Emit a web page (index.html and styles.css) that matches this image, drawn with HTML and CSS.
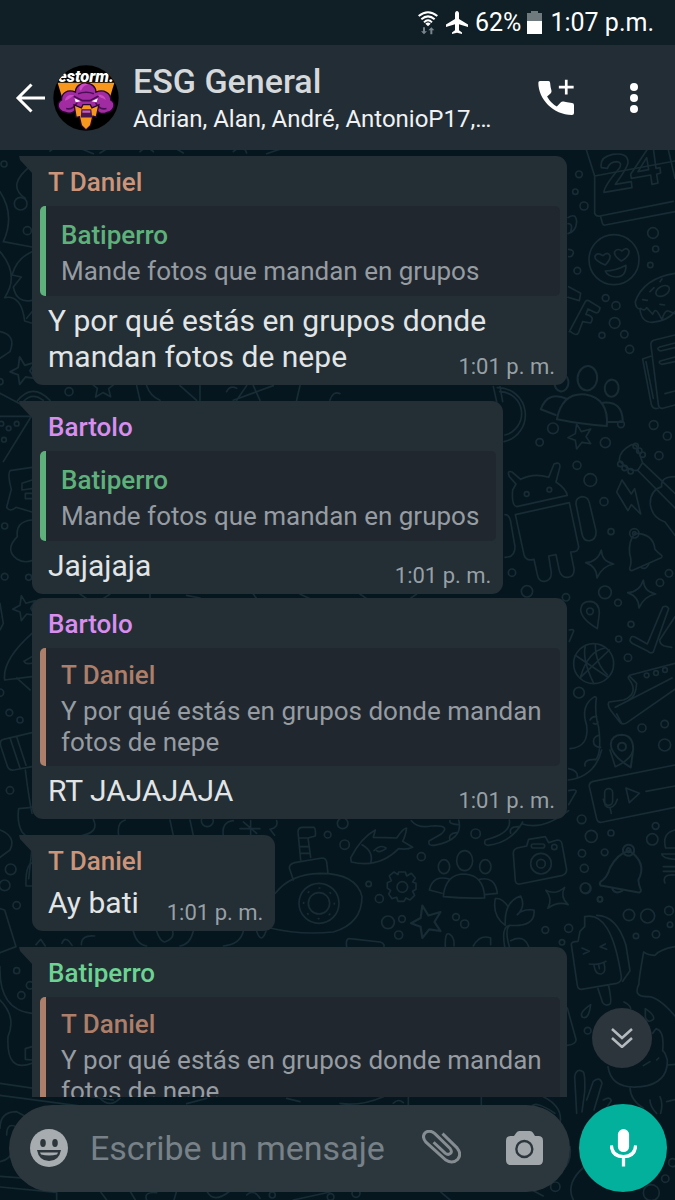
FILE: index.html
```html
<!DOCTYPE html>
<html lang="es">
<head>
<meta charset="utf-8">
<meta name="viewport" content="width=device-width, initial-scale=1">
<title>ESG General</title>
<link rel="stylesheet" href="styles.css">
</head>
<body>
<div class="status">
  <svg class="wifi" viewBox="0 0 60 72" aria-hidden="true">
    <g fill="none" stroke="#fff" stroke-width="6"><path d="M2 15Q30-8 58 15"/><path d="M10 25Q30 7 50 25"/><path d="M18 34Q30 22 42 34"/></g>
    <path d="M22 38Q30 31 38 38L30 46z" fill="#fff"/>
    <path d="M15 49h6v12h6l-9 9-9-9h6zM37 70h6V58h6l-9-9-9 9h6z" fill="#77858b"/>
  </svg>
  <svg class="plane" viewBox="0 0 24 24" aria-hidden="true"><path fill="#fff" d="M23 16v-2.400L14 8V2.500C14 1.100 13 0 12 0s-2 1.100-2 2.500V8L1 13.600V16l9-2.800v6L7 21.500V23l5-1.300 5 1.300v-1.500l-3-2.300v-6z"/></svg>
  <span>62%</span>
  <svg class="battery" viewBox="0 0 15 23" aria-hidden="true"><path fill="#6f7a7f" d="M4 0h7v2h4v8H0V2h4z"/><path fill="#fff" d="M0 10h15v13H0z"/></svg>
  <span>1:07 p.m.</span>
</div>

<header class="header">
  <button class="icon-btn back" aria-label="Atrás"><svg viewBox="0 0 30 30" fill="none" stroke="#fff" stroke-width="3"><path d="M30 15H3M16.500 1.500L3 15l13.500 13.500"/></svg></button>
  <svg class="avatar" viewBox="0 0 200 200" role="img" aria-label="Foto del grupo">
    <defs><clipPath id="round"><circle cx="100" cy="100" r="99"/></clipPath></defs>
    <g clip-path="url(#round)">
      <path fill="#000" d="M0 0h200v200H0z"/>
      <path fill="#f7981d" d="M14 54h172l-16 52H30z"/>
      <text x="100" y="52" text-anchor="middle" class="avatar-text">estorm.</text>
      <path fill="#a12ba0" stroke="#25072f" stroke-width="4" d="M68 82c0-36 62-36 62 0 24-10 46 4 45 24 18 11 9 35-12 38-18 8-29-2-33-12H72c-9 12-22 18-36 11-21-4-28-26-10-37-1-20 18-34 42-24z"/>
      <path fill="#cc4bc5" d="M80 68c4-14 20-14 27-7-10-1-16 4-20 13-3 7-8 1-7-6zM134 91c11-4 25 3 26 16-7-8-17-6-26-16zM36 108c2-14 15-20 28-16-9 5-16 14-28 16z"/>
      <path fill="none" stroke="#4a0e57" stroke-width="5" d="M63 95l27 13h22l26-14M76 87q25-9 48 0M40 132q21 5 33-18M162 132q-22 5-33-18"/>
      <path fill="#fff" d="M65 101l19 9-15 3zM136 101l-19 9 15 3z"/>
      <path fill="#f7981d" stroke="#25072f" stroke-width="4" d="M64 121l22 9 5-10h22l5 10 21-9-8 37-10-3-7 28-14 14-14-14-6-26-10 2z"/>
      <path fill="#4b164c" d="M86 134h30l3 25H84z"/><path fill="#c85fbb" d="M89 138h24v7H89z"/>
    </g>
  </svg>
  <div class="heading">
    <h1>ESG General</h1>
    <p>Adrian, Alan, André, AntonioP17,…</p>
  </div>
  <button class="icon-btn call" aria-label="Llamada grupal"><svg viewBox="0 0 110 110"><path fill="#fff" d="M6 6h25q5 0 5 5 1 14 4 23 1 5-2 8L27 52q11 20 29 30l12-13q3-3 8-2 9 3 25 4 6 0 6 6v24q0 6-6 6C45 106 1 60 1 11q0-5 5-5z"/><path d="M84 2v44M62 24h44" stroke="#fff" stroke-width="8"/></svg></button>
  <button class="icon-btn more" aria-label="Más opciones"><svg viewBox="0 0 8 30" fill="#fff"><circle cx="4" cy="4" r="4"/><circle cx="4" cy="15" r="4"/><circle cx="4" cy="26" r="4"/></svg></button>
</header>

<main class="chat">
  <svg class="wallpaper" viewBox="0 150 675 1050" preserveAspectRatio="xMidYMin slice" aria-hidden="true">
    <defs>
      <g id="star4"><path d="M5-42Q6-8 42 0 8 6-8 42-8 8-42-4-6-6 5-42z"/></g>
      <g id="star5"><path d="M-10-35L4-12 32-20 18 3 32 24 6 20-10 40-14 14-36 6-14-6z"/></g>
      <g id="bell"><path d="M-30-50Q25-50 30-2 38 8 50 16 54 22 42 26L-40 62Q-46 62-46 54-38 36-46 12-50-28-30-50z"/><circle cx="-32" cy="-50" r="14"/><circle cx="-32" cy="-50" r="5"/><path d="M-12 52q14 10 24-10"/></g>
      <g id="pin"><path d="M22 52Q-28 22-28-6-26-30 0-30 28-28 28 6z"/><circle r="10"/></g>
      <g id="people"><ellipse cx="0" cy="-48" rx="24" ry="30"/><ellipse cx="62" cy="-30" rx="17" ry="21"/><ellipse cx="-62" cy="-30" rx="17" ry="21"/><path d="M-64 60Q-58-8 0-8 58-4 60 64 0 66-64 60zM-44 8Q-94-8-106 40L-68 50M44 8Q92-2 98 50L60 54"/></g>
    </defs>
    <g class="doodle">
      <g transform="translate(480 145) scale(.3333)">
        <path d="M316 5l28 88 0 112q4 10 16 8l220-44M344 93l241-45M362 215l6 22q2 4 8 3l209-40M564 10l21 90"/>
        <path d="M364 68q-6-32 34-40 46-6 46 24 0 14-38 66l48-8 2 18-84 14q0-18 46-72 10-18-8-20-20 0-28 20zM504 10l-52 78 2 12 58-10 4 28 18-4-4-26 12-4-2-16-12 2-8-60zM500 38l6 36-32 6z"/>
        <circle cx="402" cy="344" r="75"/><path d="M376 360q-34-14-31-26 6-14 24-2 14-14 21 0 2 12-14 28zM424 348q-24-16-20-28 8-12 22-2 14-14 21 0 2 16-23 30zM376 378q30 0 62-17 0 36-30 35-26-2-32-18z"/>
        <path d="M585 385Q490 400 466 470 466 490 480 492 484 532 516 532 560 530 585 500M482 490q12 10 18-2l18 20q8-22 18-2l10 18q8-30 20-26l19 8M510 440l12-12M488 464l14 2M540 478l14 2M540 410l6-8"/><ellipse cx="548" cy="438" rx="22" ry="14" transform="rotate(-30 548 438)"/>
        <path d="M266 425l36 20-4 22-34-10M268 560l48-90q4-6 12-2l32 20q-2 20-16 14l-20-10-6 16q28 6 14 26l-24-4-12 32q-6 14-24-2M264 218q24-16 26 12-2 30-26 36M264 236q16 0 8 24M266 313q16 2 14 12-4 12-14 10"/>
        <path d="M585 570l-64 16q-10 4-8 16l22 176q2 14 14 12l36-10M512 634l-24 8 26 136q4 16 20 12M585 594l-46 12q-12 6 2 12l44-10M585 636l-44 12q-8 6 4 10l40-8M585 738l-30 8M498 650l22 110"/>
        <use href="#people" transform="translate(316 758) rotate(6) scale(1.22)"/>
        <path d="M40 725l10 45M60 725l8 45M72 890a82 82 0 0 0-20-162M75 870a66 66 0 0 0-16-130"/>
        <use href="#star5" x="300" y="872"/>
        <circle cx="297" cy="88" r="10"/><circle cx="286" cy="140" r="8"/><circle cx="312" cy="183" r="12"/><circle cx="519" cy="264" r="16"/><circle cx="527" cy="312" r="9"/><circle cx="511" cy="360" r="8"/><circle cx="292" cy="377" r="10"/><circle cx="377" cy="459" r="10"/><circle cx="408" cy="482" r="12"/><circle cx="404" cy="534" r="16"/><circle cx="366" cy="571" r="9"/><circle cx="433" cy="568" r="11"/><circle cx="449" cy="613" r="12"/><circle cx="423" cy="838" r="10"/><circle cx="219" cy="850" r="16"/><circle cx="179" cy="892" r="11"/><circle cx="376" cy="893" r="15"/><circle cx="521" cy="840" r="13"/><circle cx="562" cy="873" r="12"/>
      </g>
      <g transform="translate(480 430) scale(.3333)">
        <path d="M110 230q-16-2-12-50l10-18-20-22q-8-20 8-14l26 22q40-20 84-6l16-40q18-8 18 8l-12 46q30 20 34 40zM106 254l162-36 28 132q0 16-24 16l10 50q2 24-18 26-20 2-26-20l-10-48-22 4 8 50q0 24-20 26-18 2-22-20l-10-46q-24 6-30-14zM288 222q-2-18 18-22 18 0 22 18l20 84q2 26-18 30-20 2-24-20zM75 254q12 0 16 16l14 80q0 32-30 32"/><circle cx="140" cy="192" r="7"/><circle cx="208" cy="179" r="7"/>
        <circle cx="291" cy="106" r="12"/><circle cx="331" cy="150" r="19"/><circle cx="372" cy="215" r="12"/><circle cx="393" cy="305" r="9"/><circle cx="537" cy="77" r="12"/><circle cx="96" cy="428" r="11"/><circle cx="141" cy="484" r="17"/><circle cx="258" cy="502" r="11"/><circle cx="375" cy="487" r="19"/><circle cx="414" cy="518" r="10"/><circle cx="540" cy="458" r="11"/><circle cx="567" cy="430" r="11"/><circle cx="453" cy="583" r="9"/><circle cx="416" cy="627" r="9"/><circle cx="444" cy="683" r="11"/><circle cx="297" cy="788" r="16"/><circle cx="486" cy="894" r="12"/><circle cx="554" cy="882" r="11"/><circle cx="554" cy="945" r="18"/>
        <path d="M426 150l28 42 10-16 18 76-28-28-10 18-34-56z"/>
        <path d="M418 92q-2-28 36-48 18-2 20 16l14 38-14 22q-24 8-56-28zM472 120l113 114M490 100l95 90M585 140q-44 0-40 30M545 170q-36 12-34 54 6 40 44 52l30 40"/><g><circle cx="467" cy="48" r="8"/><circle cx="478" cy="62" r="8"/><circle cx="488" cy="74" r="8"/><circle cx="421" cy="102" r="8"/><circle cx="434" cy="114" r="8"/><circle cx="452" cy="124" r="8"/></g>
        <use href="#bell" transform="translate(495 360)"/><use href="#star4" x="359" y="402"/><use href="#star4" x="485" y="492"/><use href="#pin" x="330" y="544"/><use href="#pin" transform="translate(426 950) scale(1.2)"/>
        <path d="M450 632q2-18 16-10l36 20 46-110q12-8 18 4l-46 130q-8 6-16-2l-48-24zM585 560l-46 70q0 12 14 18l22 4M268 600q16-4 12 6l-12 28"/>
        <circle cx="341" cy="701" r="60"/><path d="M286 676l98 66M300 744l88-84M316 648q-10 40 24 110M374 654q-50 10-72 86M346 642q0 60 36 92"/>
        <path d="M585 700l-136 36q-8 6 0 14 28 40-18 60l-44 6q-6 10 6 26l28 36q8 8 20 0l144-100M406 832l170-88M426 882l-16-30M450 740l20 20q-2 40-24 50"/><circle cx="500" cy="736" r="7"/><circle cx="528" cy="729" r="7"/><circle cx="555" cy="720" r="7"/>
        <path d="M270 956q58-4 50-70-20-60 24-86 8 0 4 12-4 40 8 80 10 80-10 98M330 870q6-12 20-10M340 880q10 6 14-4M356 916q-20 6-14 26 6 10 20 10"/>
      </g>
      <g transform="translate(270 750) scale(.3333)">
        <path d="M1215 45L970 94q-14 4-12 16l22 96q4 14 18 10l217-44M1068 114l40 16-30 28zM1128 124l87-16M1000 148l6 18q14 16 30-4l6-14M1020 172l4 18"/><rect x="1004" y="116" width="24" height="50" rx="12"/>
        <path d="M1020 0l16 50q46-20 54-50M895 90q80-10 100-90M896 56q30 6 26 26M945 48q-4-20 30-20M896 122q26-6 22 4l-22 38M758 222q60 20 138-40M424 212q20 24 60 16 60-4 30 24l-36 20q-6 16 14 14 90-16 74-76M540 212q-4 10 24 12M540 270q-6-20 20-22M646 270q80-20 72-60M646 270q-6 16 8 16 70-8 104-70M722 250q-6-20 24-20"/>
        <path d="M242 324q30-60 74-84l-6 22q40 0 70 2 20-30 30-30-4 26-12 40l30 18q-18 8-42 4-60 60-142 40zM276 284q36 20 26 56M312 302q20-20 36-8M348 296q-20 14-28 6"/>
        <path d="M16 430Q60 372 150 370 260 370 276 440 276 520 190 546 90 556 0 534M70 390l-12-36q0-12 16-16l82-14q12 0 14 12l4 34M92 330l-8-84q0-14 14-14l34 0q6 4 4 26l-22 6 8 58M86 264h30M88 290h28M92 310h28"/><circle cx="147" cy="460" r="60"/><circle cx="147" cy="460" r="32"/><circle cx="147" cy="460" r="46" stroke-dasharray="2 34"/>
        <circle cx="397" cy="411" r="16"/><path d="M384 374l2-8h20l4 12 14-8 12 14-8 12 10 4v18l-10 6 6 12-14 14-12-6-6 10h-18l-4-12-14 4-10-14 6-10-10-8v-16l12-6-6-14 14-12z"/>
        <use href="#people" x="584" y="380"/><use href="#star5" transform="translate(470 512) scale(1.3)"/><use href="#star4" transform="translate(860 444) rotate(30) scale(.95)"/>
        <path d="M750 402q-12 2-14-10L730 310q0-12 12-16l28-6 6-20 50-8 10 18 26-8q12 0 14 12l14 76q0 14-12 18z"/><circle cx="813" cy="341" r="31"/><circle cx="813" cy="341" r="13"/><circle cx="853" cy="291" r="8"/><rect x="784" y="282" width="40" height="12" rx="6"/>
        <path d="M704 590q-10-60 14-64 80 6 74-46-34-4-50 14 26-24 10-56-50 16-46 88-40-28-30-80 20-4 38 24M718 590q-14-50 0-62M722 572q40-20 54 18M230 590q-4-26 10-24l90 10q14 4 12 14M526 590q-2-44 12-38 16 8 14 36M610 588q20-36 52-24v20"/>
        <use href="#bell" transform="translate(1074 372) rotate(34) scale(1.2)"/><path d="M1215 240q-40 10-28 54h28M1215 312h-40q2 14 40 16M1180 350h35M1180 364h35M1215 375q-40-4-30 24"/>
        <circle cx="218" cy="220" r="16"/><circle cx="173" cy="254" r="10"/><circle cx="224" cy="284" r="14"/><circle cx="454" cy="320" r="12"/><circle cx="617" cy="251" r="14"/><circle cx="296" cy="402" r="8"/><circle cx="328" cy="446" r="12"/><circle cx="354" cy="517" r="19"/><circle cx="396" cy="507" r="10"/><circle cx="386" cy="555" r="12"/><circle cx="558" cy="501" r="10"/><circle cx="584" cy="522" r="12"/><circle cx="826" cy="540" r="10"/><circle cx="896" cy="535" r="12"/><circle cx="935" cy="208" r="13"/><circle cx="964" cy="259" r="18"/><circle cx="1023" cy="249" r="9"/><circle cx="936" cy="310" r="11"/><circle cx="1004" cy="307" r="10"/><circle cx="943" cy="355" r="12"/><circle cx="946" cy="414" r="15"/><circle cx="990" cy="448" r="7"/><circle cx="1147" cy="268" r="17"/><circle cx="1157" cy="228" r="10"/>
      </g>
      <g transform="translate(550 880) scale(.3333)">
        <path d="M104 110q80-20 110 180 2 16-14 20L94 328q-10 0-12-12L64 194q-2-10 20-10l6-30 14-14zM140 106q60 0 88 90l12 76-22 32M144 326l14 42q8 12 22 4 6-6-4-54M96 204l22 10-18 8M166 192l-16 8 20 8M118 252q30 4 50-8M132 256q4 28 22 26 16-4 8-32M146 254l2 12"/>
        <path d="M375 200q-46 8-60 26-20 0-34-10-16 90-14 96-20 40 28 38 30 0 80 58M122 374q-38 26-24 38 18 8 24-38zM222 366q20 10 20 20M286 386q30 20 24 32-16 14-24-6zM52 384l26 94q2 14-26 18"/>
        <path d="M174 560q10 70 100 60 80-10 78-80-8-26-14-28 6-60-20-66l-10 14M240 620q0 40 40 64M354 555l21-2M330 650q10 20 2 50M350 665l25-6M80 700l-6-110q6-28 26-14 6 10 4 60l-8 60M110 660l20-56q20-16 26 6l-24 80M160 660q20-12 24 2l-20 30M320 540l6-6M300 545l-20 12"/>
        <circle cx="107" cy="25" r="16"/><circle cx="150" cy="58" r="8"/><circle cx="237" cy="105" r="17"/><circle cx="293" cy="108" r="21"/><circle cx="357" cy="92" r="13"/><circle cx="360" cy="134" r="8"/><circle cx="318" cy="163" r="11"/><circle cx="258" cy="168" r="8"/><circle cx="113" cy="452" r="10"/><circle cx="36" cy="187" r="8"/>
      </g>
      <g transform="translate(340 1000) scale(.3333)">
        <path d="M0 310q60 10 130-20M205 290v26M424 290v28M160 310q14-16 30-2M575 320q10-20 70 20M610 290q60 30 50 80M700 600q-30-60 60-120M580 572l30 16M690 440q6 40-20 70M300 574l30 26M930 300q0 20 20 40"/>
        <circle cx="646" cy="560" r="14"/><circle cx="976" cy="536" r="11"/><circle cx="934" cy="578" r="24"/><circle cx="998" cy="488" r="12"/><circle cx="48" cy="580" r="12"/>
      </g>
      <g transform="translate(0 145) scale(.3333)">
        <path d="M0 140q46 70 10 150l86 16M0 320q60 70 14 138 50-10 60 70l20 6M96 320q-46 20-60 70l28 6-24 30q10 50 56 40M96 60q-80 60-20 100M0 560q50 10 30 60L0 640M96 500l-16 20"/>
        <use href="#star5" transform="translate(70 674) scale(1.1)"/><use href="#star5" transform="translate(310 722) rotate(20)"/><circle cx="62" cy="176" r="19"/><circle cx="82" cy="257" r="12"/><circle cx="12" cy="57" r="9"/><circle cx="207" cy="740" r="12"/><circle cx="0" cy="710" r="9"/>
        <path d="M50 770q46-60 100-4M70 770q26-30 60-4M410 722l10 44M440 722q10 30 40 44M540 722l50 44M600 722v44M680 740q10-20 30-10M700 766l120-44M740 722l-30 44M760 722l20 44M900 722l-10 44M990 766q10-30 30-20"/>
        <path d="M0 745l95 50M0 814h94L10 950"/><circle cx="4" cy="836" r="7"/><circle cx="50" cy="836" r="7"/><circle cx="26" cy="850" r="7"/><circle cx="12" cy="884" r="7"/>
        <path d="M150 18l20-14M240 10l40 16M300 24l30-18M420 20q20-20 40 0M520 6l30 18M700 20q30-26 40 4M800 26l60-20"/>
      </g>
      <g transform="translate(0 370) scale(.3333)">
        <path d="M96 292l-66 10q-8 10 4 56l-14 54q10 16 28 0l48 14M96 330l-30 10v20l30-4M96 370h-20v16h20M96 450q-50 4-44 50-40 40 0 68 20 12 44 4M0 700l10 60-10 20M96 790q-90 80-82 140l82-10M96 860l-24 14q4 10 24 6M50 924l40 36"/>
        <use href="#star5" transform="translate(74 712)"/><circle cx="14" cy="468" r="9"/><circle cx="14" cy="620" r="10"/><circle cx="86" cy="622" r="9"/><circle cx="0" cy="968" r="11"/><circle cx="28" cy="1028" r="10"/>
        <path d="M240 672l20 14M330 672l-20 14M450 672v14M560 676l40 8M760 672l10 14M900 672l30 14M1080 672l20 14M1250 672l-20 14"/>
      </g>
      <g transform="translate(0 580) scale(.3333)">
        <path d="M96 458L10 478q-12 2-8 20l20 60q4 14 20 12l54-10M30 474l30 90M50 470l28 86M76 570q10 80 20 130M96 682l-40 4q-6 40 10 70l30 30M0 750q50 20 30 60L0 832M86 896l10-90M280 718q20 40-40 50M356 766q-6-40 20-46M510 720l10 46M570 720l10 46M670 766q-6-40 30-44M830 722q6 20-20 26l14 18M720 746h60M730 726l40 34M752 722v44"/>
        <circle cx="60" cy="420" r="9"/><circle cx="30" cy="631" r="11"/><circle cx="32" cy="868" r="16"/><circle cx="622" cy="722" r="18"/>
      </g>
      <g transform="translate(0 820) scale(.3333)">
        <path d="M96 128q-20 10-18 70h18M0 266l14 4 34 110L0 398M108 374l14-16 14 20M244 374q0-30 40-26M186 370q10-26 30 6M400 334q10 40 40 44M470 334q10 30 24 32 30-10 24-32M580 334q-10 40-40 44M730 334q-10 40-60 44M770 334q14 40 28 0M0 440q-4 130 96 140M0 540q50 50 24 110-6 110 72 80M96 680l-20 6v32l20 2M0 790l340 50M0 826l300 40"/>
        <circle cx="14" cy="196" r="16"/><circle cx="50" cy="256" r="11"/><circle cx="50" cy="452" r="9"/><circle cx="64" cy="526" r="11"/><circle cx="90" cy="496" r="11"/>
      </g>
      <g transform="translate(0 1085) scale(.3333)">
        <path d="M0 130q0-50 50-50l30 16M20 150q0-40 30-24M0 230q40-10 34-40M0 274l280 20M0 306l170 16v23M300 318l20 27M390 318l16 27M440 345q-10-26 30-22M530 318l-8 27M620 318q20 40 70 0M740 330q20-20 40 10M860 40l40 10M300 40q30 30 60 0M560 56l60-16M880 345l110-24"/>
        <circle cx="817" cy="330" r="9"/><circle cx="992" cy="336" r="10"/>
      </g>
    </g>
  </svg>

  <div class="messages">
    <article class="bubble tail">
      <h2 class="name daniel">T Daniel</h2>
      <blockquote class="quote from-batiperro"><b>Batiperro</b><span>Mande fotos que mandan en grupos</span></blockquote>
      <p class="text">Y por qué estás en grupos donde mandan fotos de nepe<time>1:01 p. m.</time></p>
    </article>
    <article class="bubble tail">
      <h2 class="name bartolo">Bartolo</h2>
      <blockquote class="quote from-batiperro"><b>Batiperro</b><span>Mande fotos que mandan en grupos</span></blockquote>
      <p class="text">Jajajaja<time>1:01 p. m.</time></p>
    </article>
    <article class="bubble follow">
      <h2 class="name bartolo">Bartolo</h2>
      <blockquote class="quote from-daniel"><b>T Daniel</b><span>Y por qué estás en grupos donde mandan fotos de nepe</span></blockquote>
      <p class="text">RT JAJAJAJA<time>1:01 p. m.</time></p>
    </article>
    <article class="bubble tail">
      <h2 class="name daniel">T Daniel</h2>
      <p class="text">Ay bati<time>1:01 p. m.</time></p>
    </article>
    <article class="bubble tail">
      <h2 class="name batiperro">Batiperro</h2>
      <blockquote class="quote from-daniel"><b>T Daniel</b><span>Y por qué estás en grupos donde mandan fotos de nepe</span></blockquote>
    </article>
  </div>

  <button class="scroll-down" aria-label="Ir al final"><svg viewBox="0 0 22 20" fill="none" stroke="#b4babd" stroke-width="2.500"><path d="M1 1l10 9L21 1M1 10l10 9 10-9"/></svg></button>

  <form class="composer">
    <div class="field">
      <button type="button" class="icon-btn emoji" aria-label="Emojis"><svg viewBox="0 0 38 38"><circle cx="19" cy="19" r="19" fill="#a6acaf"/><g fill="#2c363c"><ellipse cx="13" cy="14" rx="2.800" ry="4"/><ellipse cx="25" cy="14" rx="2.800" ry="4"/><path d="M7 21h24q-2 11-12 11T7 21z"/></g><path d="M10 23.500h18l-1 2q-8 2-16 0z" fill="#a6acaf"/></svg></button>
      <input type="text" aria-label="Mensaje" placeholder="Escribe un mensaje">
      <button type="button" class="icon-btn clip" aria-label="Adjuntar"><svg viewBox="0 0 118 106" fill="none" stroke="#858d92" stroke-width="9"><path d="M62 11l44 43q15 19 2 35-16 15-36 2L12 37Q-2 20 10 8q14-10 29 3l46 45q7 10 1 15-7 6-16-1L35 37"/></svg></button>
      <button type="button" class="icon-btn camera" aria-label="Cámara"><svg viewBox="0 0 111 102"><path fill="#a1a7aa" d="M40 0h32q6 0 9 5l6 10h10q14 0 14 14v58q0 15-14 15H14Q0 102 0 87V29q0-14 14-14h10l7-10q3-5 9-5z"/><circle cx="55" cy="54" r="24" fill="none" stroke="#2c363c" stroke-width="7"/></svg></button>
    </div>
    <button type="button" class="mic" aria-label="Grabar mensaje de voz"><svg viewBox="0 0 82 114"><rect x="24" y="0" width="34" height="70" rx="17" fill="#fff"/><path d="M4 50q2 34 37 34t37-34M41 84v30" fill="none" stroke="#fff" stroke-width="10"/></svg></button>
  </form>
</main>
</body>
</html>
```

FILE: styles.css
```css
* { box-sizing: border-box; }

body {
  margin: 0;
  height: 100vh;
  display: flex;
  flex-direction: column;
  overflow: hidden;
  background: #06161e;
  color: #e2e5e6;
  font-family: Roboto, "Liberation Sans", sans-serif;
}

h1, h2, p, blockquote { margin: 0; font-weight: 400; }
svg { display: block; flex: none; }

button {
  padding: 0;
  border: 0;
  background: none;
  cursor: pointer;
}

.icon-btn { flex: none; }
.icon-btn svg { width: 100%; }

.status {
  flex: none;
  height: 45px;
  padding-right: 21px;
  display: flex;
  align-items: center;
  justify-content: flex-end;
  background: #101e25;
  color: #fff;
  font-size: 25px;
}
.wifi { width: 20px; margin-right: 7px; }
.plane { width: 24px; margin-right: 6px; }
.battery { width: 15px; margin: 0 8px 0 6px; }

.header {
  flex: none;
  height: 105px;
  padding: 0 37px 0 15px;
  display: flex;
  align-items: center;
  background: #232d35;
}
.back { width: 30px; margin-right: 8px; }
.avatar { width: 66px; height: 66px; }
.avatar-text {
  fill: #fff;
  font: italic 900 50px Roboto, "Liberation Sans", sans-serif;
}
.heading {
  flex: 1;
  min-width: 0;
  margin-left: 14px;
  white-space: nowrap;
}
.heading h1 {
  color: #d5d9db;
  font-size: 34px;
  line-height: 42px;
  font-weight: 500;
}
.heading p {
  color: #f0f2f3;
  font-size: 24px;
  line-height: 34px;
}
.call { width: 37px; margin-right: 55px; }
.more { width: 8px; }

.chat {
  position: relative;
  flex: 1;
  min-height: 0;
  display: flex;
  flex-direction: column;
}
.wallpaper {
  position: absolute;
  inset: 0;
  width: 100%;
  height: 100%;
}
.doodle {
  fill: none;
  stroke: #182c35;
  stroke-width: 5;
  stroke-linejoin: round;
  stroke-linecap: round;
}

.messages {
  position: relative;
  flex: 1;
  min-height: 0;
  overflow: hidden;
  padding: 6px 108px 0 32px;
  display: flex;
  flex-direction: column;
  align-items: flex-start;
}
.bubble {
  position: relative;
  flex: none;
  max-width: 100%;
  margin-bottom: 16px;
  padding: 0 7px 4px 8px;
  border-radius: 11px;
  background: #232e35;
}
.bubble:has(+ .follow) { margin-bottom: 4px; }
.tail { border-top-left-radius: 0; }
.tail::before {
  content: "";
  position: absolute;
  top: 0;
  left: -13px;
  width: 14px;
  height: 18px;
  background: #232e35;
  clip-path: polygon(0 0, 100% 0, 100% 100%, 1px 4px);
}

.name {
  padding: 11px 8px 8px;
  font-size: 26px;
  line-height: 31px;
  font-weight: 500;
}
.daniel { color: #cc9579; }
.bartolo { color: #d98eef; }
.batiperro { color: #6dd392; }

.quote {
  min-height: 90px;
  padding: 12px 17px 8px 15px;
  display: flex;
  flex-direction: column;
  justify-content: center;
  gap: 5px;
  border-left: 6px solid;
  border-radius: 5px;
  background: #20272e;
  font-size: 26px;
  line-height: 31px;
}
.quote b { font-weight: 500; }
.quote span { color: #969ca2; }
.from-batiperro { color: #5fb17c; }
.from-daniel { color: #ad7e69; }

.text {
  display: flow-root;
  padding: 0 5px 0 8px;
  font-size: 30px;
  line-height: 36px;
}
.quote + .text { margin-top: 7px; }
.text time {
  float: right;
  margin: 14px 0 0 28px;
  color: #98a0a5;
  font-size: 22px;
  line-height: 28px;
}

.scroll-down {
  position: absolute;
  right: 23px;
  bottom: 132px;
  width: 60px;
  height: 60px;
  display: grid;
  place-items: center;
  border-radius: 50%;
  background: #2b353b;
}
.scroll-down svg { width: 22px; }

.composer {
  position: relative;
  flex: none;
  padding: 7px 8px 8px 9px;
  display: flex;
  align-items: center;
  gap: 9px;
}
.field {
  flex: 1;
  min-width: 0;
  height: 87px;
  padding: 0 27px 0 21px;
  display: flex;
  align-items: center;
  border-radius: 44px;
  background: #2c373d;
}
.emoji { width: 38px; }
.field input {
  flex: 1;
  min-width: 0;
  margin: 0 20px 0 22px;
  padding: 0;
  border: 0;
  outline: 0;
  background: none;
  color: #e2e5e6;
  font: 34px/44px Roboto, "Liberation Sans", sans-serif;
}
.field input::placeholder { color: #778187; opacity: 1; }
.clip { width: 39px; margin-right: 45px; }
.camera { width: 37px; }
.mic {
  flex: none;
  width: 88px;
  height: 88px;
  display: grid;
  place-items: center;
  border-radius: 50%;
  background: #02b09c;
}
.mic svg { width: 27px; }
```
